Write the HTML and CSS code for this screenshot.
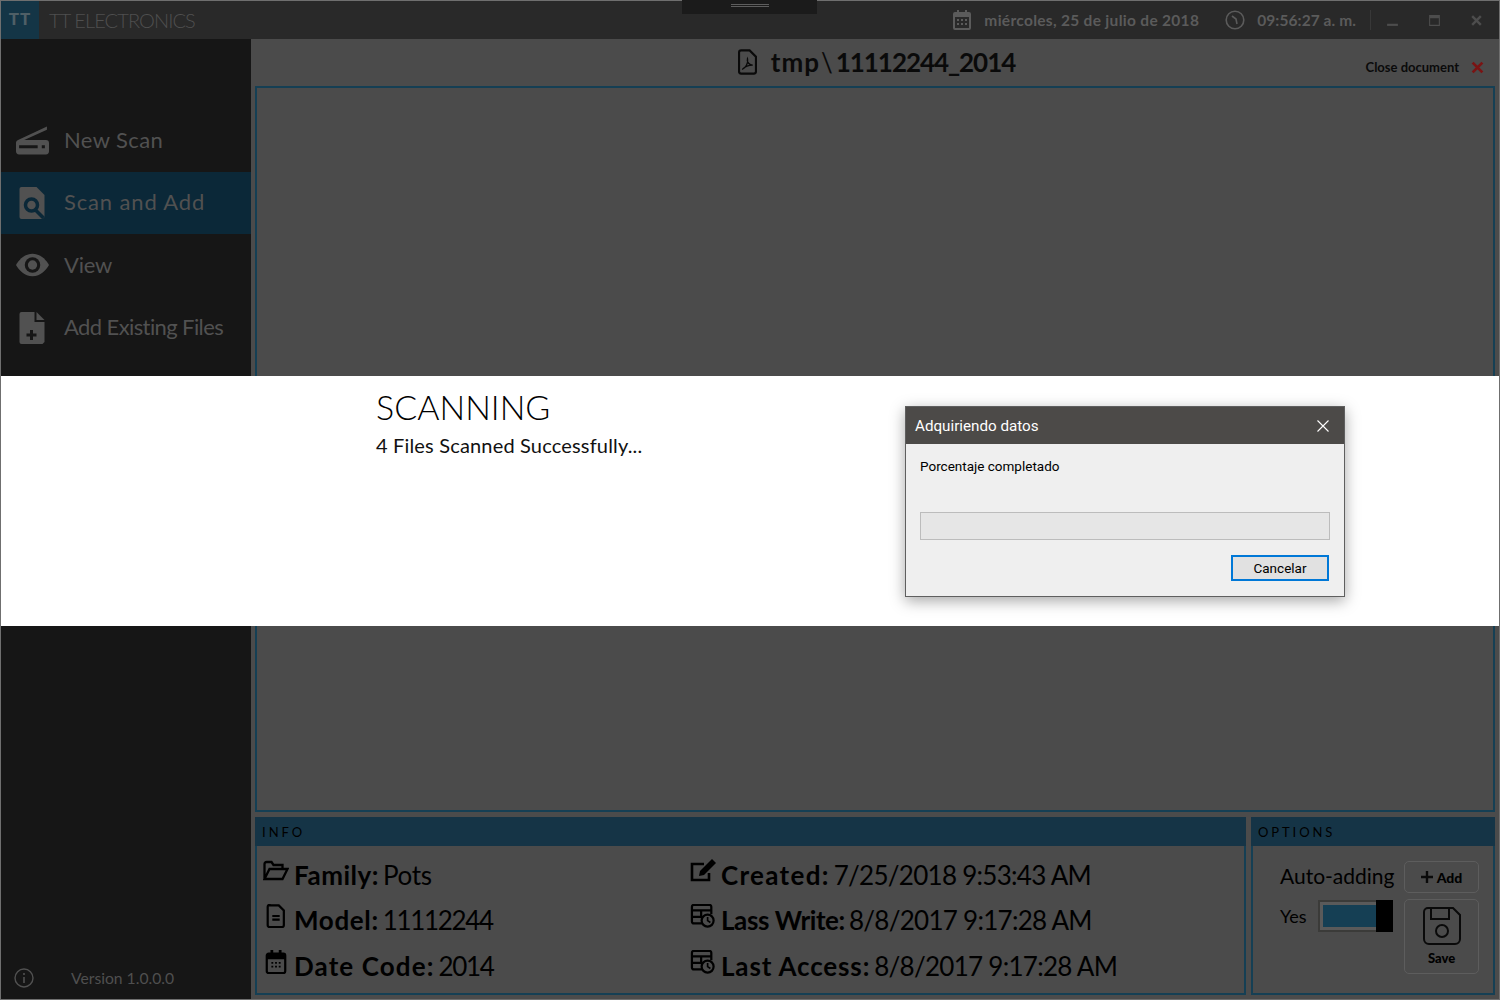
FILE: index.html
```html
<!DOCTYPE html>
<html lang="es">
<head>
<meta charset="utf-8">
<title>TT Electronics</title>
<link rel="stylesheet" href="styles.css">
</head>
<body>
<div class="window">
  <header class="titlebar">
    <div class="logo">TT</div>
    <div class="app-name">TT ELECTRONICS</div>
    <div class="status">
      <svg class="st-icon" viewBox="0 0 18 20"><path fill="#5b5b5b" d="M4 0h2v2h6V0h2v2h2a2 2 0 0 1 2 2v14a2 2 0 0 1-2 2H2a2 2 0 0 1-2-2V4a2 2 0 0 1 2-2h2zM2 7v11h14V7z"/><path fill="#5b5b5b" d="M4 9h2v2H4zM8 9h2v2H8zM12 9h2v2h-2zM4 13h2v2H4zM8 13h2v2H8zM12 13h2v2h-2z"/></svg>
      <span class="st-text date">miércoles, 25 de julio de 2018</span>
      <svg class="st-icon clock" viewBox="0 0 20 20"><circle cx="10" cy="10" r="8.8" fill="none" stroke="#5b5b5b" stroke-width="1.6"/><path d="M7 6l4 3 1 5" fill="none" stroke="#5b5b5b" stroke-width="1.6"/></svg>
      <span class="st-text time">09:56:27 a. m.</span>
      <span class="divider"></span>
      <div class="win-btns">
        <svg viewBox="0 0 12 12" class="wb"><path fill="#4d4d4d" d="M1 9h10v2H1z"/></svg>
        <svg viewBox="0 0 12 12" class="wb"><path fill="#4d4d4d" d="M1 1h10v10H1zM2 4v6h8V4z" fill-rule="evenodd"/></svg>
        <svg viewBox="0 0 12 12" class="wb"><path d="M2 2l8 8M10 2l-8 8" stroke="#4d4d4d" stroke-width="2.2"/></svg>
      </div>
    </div>
  </header>
  <div class="handle"><span></span></div>
  <div class="body">
    <aside class="sidebar">
      <nav class="nav">
        <a class="nav-item sp-new">
          <svg class="nav-icon" viewBox="0 0 32 28"><path fill="#515151" d="M2 14L30 1v3L8 14h21a3 3 0 0 1 3 3v8a3 3 0 0 1-3 3H3a3 3 0 0 1-3-3v-8a3 3 0 0 1 2-3z"/><path fill="#161616" d="M3 19h18v3H3zM25 19h3v3h-3z"/></svg>
          <span>New Scan</span>
        </a>
        <a class="nav-item active sp-scan">
          <svg class="nav-icon" viewBox="0 0 32 32"><path fill="#515151" d="M5 0h15l8 8v22l-2 2H5a2 2 0 0 1-2-2V2a2 2 0 0 1 2-2z"/><circle cx="15" cy="18" r="6" fill="none" stroke="#0b2838" stroke-width="3.5"/><path d="M19 23l8 8" stroke="#0b2838" stroke-width="3.5"/></svg>
          <span>Scan and Add</span>
        </a>
        <a class="nav-item sp-view">
          <svg class="nav-icon" viewBox="0 0 32 22"><path fill="#515151" d="M16 0c8 0 13 6 16 11-3 5-8 11-16 11S3 16 0 11C3 6 8 0 16 0z"/><circle cx="16" cy="11" r="7.5" fill="#161616"/><circle cx="16" cy="11" r="4.5" fill="#515151"/></svg>
          <span>View</span>
        </a>
        <a class="nav-item sp-files">
          <svg class="nav-icon" viewBox="0 0 32 32"><path fill="#515151" d="M5 0h13v10h10v20l-2 2H5a2 2 0 0 1-2-2V2a2 2 0 0 1 2-2zM20 0l8 8h-8z"/><path d="M10 23h10M15 18v10" stroke="#161616" stroke-width="3"/></svg>
          <span>Add Existing Files</span>
        </a>
      </nav>
      <footer class="version">
        <svg class="info-icon" viewBox="0 0 20 20"><circle cx="10" cy="10" r="9" fill="none" stroke="#515151" stroke-width="1.4"/><path d="M10 9v6M10 5v2" stroke="#515151" stroke-width="1.6"/></svg>
        <span>Version 1.0.0.0</span>
      </footer>
    </aside>
    <main class="main">
      <div class="doc-head">
        <div class="doc-title">
          <svg class="pdf" viewBox="0 0 18 24"><path fill="none" stroke="#0a0a0a" stroke-width="2" d="M3 1h8l6 6v14a2 2 0 0 1-2 2H3a2 2 0 0 1-2-2V3a2 2 0 0 1 2-2z"/><path fill="none" stroke="#0a0a0a" stroke-width="1.3" d="M4 19c3-1 6-6 5-10-1 3 2 6 5 6-3 0-7 1-10 4z"/></svg>
          <span><span class="t-dir">tmp</span><span class="t-sep">\</span><span class="t-num">11112244_2014</span></span>
        </div>
        <div class="close-doc">
          <span>Close document</span>
          <svg class="close-x" viewBox="0 0 12 12"><path d="M1.5 1.5l9 9M10.500 1.500l-9 9" stroke="#7a1414" stroke-width="2.600"/></svg>
        </div>
      </div>
      <div class="preview"></div>
      <div class="panels">
        <section class="panel">
          <h2 class="panel-title">INFO</h2>
          <div class="info-grid">
            <div class="info-col col-a">
              <p class="row"><svg class="ri" viewBox="0 0 26 20"><path fill="none" stroke="#000" stroke-width="2.300" d="M1.500 18V3a2 2 0 0 1 2-2h5l2 3h9v4M1.500 18l5-10h18l-5 10z"/></svg><b class="k-family">Family:</b><span class="val val-word">Pots</span></p>
              <p class="row"><svg class="ri narrow" viewBox="0 0 20 26"><path fill="none" stroke="#000" stroke-width="2.400" d="M3 1.500h10l5.500 5.500v16a2 2 0 0 1-2 2H3a2 2 0 0 1-2-2V3a2 2 0 0 1 2-2zM6 13h8M6 17h8"/></svg><b class="k-model">Model:</b><span class="val val-code">11112244</span></p>
              <p class="row"><svg class="ri narrow" viewBox="0 0 22 26"><path fill="none" stroke="#000" stroke-width="2.400" d="M3 4h16a2 2 0 0 1 2 2v17a2 2 0 0 1-2 2H3a2 2 0 0 1-2-2V6a2 2 0 0 1 2-2z"/><path fill="#000" d="M1 4h20v6H1zM5 0h3v5H5zM14 0h3v5h-3zM6 13h2v2H6zM10 13h2v2h-2zM14 13h2v2h-2zM6 17h2v2H6zM10 17h2v2h-2zM14 17h2v2h-2z"/></svg><b class="k-date">Date Code:</b><span class="val val-code">2014</span></p>
            </div>
            <div class="info-col col-b">
              <p class="row"><svg class="ri" viewBox="0 0 26 24"><path fill="none" stroke="#000" stroke-width="2.600" d="M19 14v7H2V5h12"/><path fill="#000" d="M10 12l12-12 4 4-12 12-5 1z"/></svg><b class="k-created">Created:</b><span class="val">7/25/2018 9:53:43 AM</span></p>
              <p class="row"><svg class="ri" viewBox="0 0 26 26"><path fill="none" stroke="#000" stroke-width="2.400" d="M12 21H3a2 2 0 0 1-2-2V3a2 2 0 0 1 2-2h17a2 2 0 0 1 2 2v8M1 7h21M1 14h11M11 7v7"/><circle cx="18" cy="18" r="6.500" fill="none" stroke="#000" stroke-width="2.400"/><path d="M18 14v4l3 2" fill="none" stroke="#000" stroke-width="1.800"/></svg><b class="k-write">Lass Write:</b><span class="val">8/8/2017 9:17:28 AM</span></p>
              <p class="row"><svg class="ri" viewBox="0 0 26 26"><path fill="none" stroke="#000" stroke-width="2.400" d="M12 21H3a2 2 0 0 1-2-2V3a2 2 0 0 1 2-2h17a2 2 0 0 1 2 2v8M1 7h21M1 14h11M11 7v7"/><circle cx="18" cy="18" r="6.500" fill="none" stroke="#000" stroke-width="2.400"/><path d="M18 14v4l3 2" fill="none" stroke="#000" stroke-width="1.800"/></svg><b class="k-access">Last Access:</b><span class="val">8/8/2017 9:17:28 AM</span></p>
            </div>
          </div>
        </section>
        <section class="panel options">
          <h2 class="panel-title wide">OPTIONS</h2>
          <div class="opt-body">
            <div class="opt-left">
              <div class="auto">Auto-adding</div>
              <div class="yes-row">
                <span>Yes</span>
                <div class="toggle"><div class="track"></div><div class="thumb"></div></div>
              </div>
            </div>
            <div class="opt-right">
              <button class="btn add"><svg viewBox="0 0 12 12" class="plus"><path d="M6 0v12M0 6h12" stroke="#0a0a0a" stroke-width="2.400"/></svg><span>Add</span></button>
              <button class="btn save">
                <svg viewBox="0 0 38 38" class="disk"><path fill="none" stroke="#0a0a0a" stroke-width="2" d="M5 1h25l7 7v24a5 5 0 0 1-5 5H6a5 5 0 0 1-5-5V5a4 4 0 0 1 4-4zM8 1v11h18V1"/><circle cx="19" cy="24" r="6" fill="none" stroke="#0a0a0a" stroke-width="2"/></svg>
                <span>Save</span>
              </button>
            </div>
          </div>
        </section>
      </div>
    </main>
  </div>
  <div class="band">
    <div class="scan-text">
      <h1>SCANNING</h1>
      <p>4 Files Scanned Successfully...</p>
    </div>
    <div class="dialog">
      <div class="dlg-title"><span>Adquiriendo datos</span>
        <svg viewBox="0 0 12 12" class="dlg-x"><path d="M.5.5l11 11M11.500.5l-11 11" stroke="#fff" stroke-width="1.100"/></svg>
      </div>
      <div class="dlg-body">
        <p class="dlg-label">Porcentaje completado</p>
        <div class="progress"></div>
        <div class="dlg-actions"><button class="cancel">Cancelar</button></div>
      </div>
    </div>
  </div>
</div>
</body>
</html>
```
FILE: styles.css
```css
* { box-sizing: border-box; }
html, body { margin: 0; padding: 0; }
body { width: 1500px; height: 1000px; overflow: hidden; font-family: "Lato", "Liberation Sans", sans-serif; }
.window { position: relative; width: 1500px; height: 1000px; border: 1px solid #6f6f6f; display: flex; flex-direction: column; background: #4b4b4b; }
.titlebar { height: 38px; flex: none; background: #292929; display: flex; align-items: center; }
.logo { width: 38px; height: 38px; background: #143546; color: #4f5f66; font-weight: 900; font-size: 17px; display: flex; align-items: center; justify-content: center; letter-spacing: 1px; padding-bottom: 4px; }
.app-name { margin-left: 10px; color: #4f4f4f; font-size: 20px; font-weight: 300; letter-spacing: -0.9px; }
.status { margin-left: auto; display: flex; align-items: center; }
.st-icon { width: 18px; height: 20px; }
.st-text { color: #5b5b5b; font-size: 15.500px; font-weight: 700; white-space: nowrap; }
.date { margin-left: 13px; letter-spacing: .3px; }
.clock { width: 20px; margin-left: 26px; }
.time { margin-left: 12px; letter-spacing: .08px; }
.divider { width: 1px; height: 20px; background: #383838; margin-left: 14px; }
.win-btns { display: flex; gap: 29px; margin-left: 15px; margin-right: 16px; }
.wb { width: 13px; height: 13px; }
.handle { position: absolute; left: 681px; top: -1px; width: 135px; height: 14px; background: #1b1b1b; display: flex; justify-content: center; padding-top: 4px; }
.handle span { display: block; width: 38px; height: 3px; border-top: 1px solid #5e5e5e; border-bottom: 1px solid #5e5e5e; }
.body { flex: 1; min-height: 0; display: flex; }
.sidebar { width: 250px; flex: none; background: #161616; display: flex; flex-direction: column; padding-top: 70px; }
.nav { display: flex; flex-direction: column; gap: 0; }
.nav-item { height: 62.500px; display: flex; align-items: center; padding-left: 15px; color: #515151; font-size: 22px; font-weight: 400; }
.nav-item span { margin-bottom: 2px; }
.nav-item.active { background: #0b2838; }
.sp-new { letter-spacing: .4px; }
.sp-scan { letter-spacing: .85px; }
.sp-view { letter-spacing: -.25px; }
.sp-files { letter-spacing: -.6px; }
.nav-icon { width: 33px; height: 32px; margin-right: 15px; }
.version { margin-top: auto; height: 40px; display: flex; align-items: center; padding: 0 0 3px 13px; color: #4f4f4f; font-size: 15.700px; }
.info-icon { width: 20px; height: 20px; margin-right: 37px; }
.main { flex: 1; min-width: 0; display: flex; flex-direction: column; padding: 0 4px 4px 4px; }
.doc-head { height: 47px; flex: none; display: flex; align-items: center; position: relative; justify-content: center; }
.doc-title { display: flex; align-items: center; gap: 14px; font-size: 26px; font-weight: 700; color: #0a0a0a; margin: -2px 0 0 3px; }
.t-dir { letter-spacing: 1px; }
.t-sep { margin: 0 3px 0 1px; font-weight: 400; }
.t-num { letter-spacing: -1.050px; }
.pdf { width: 19px; height: 26px; }
.close-doc { position: absolute; right: 11px; top: 20px; display: flex; align-items: center; gap: 12px; font-size: 13px; font-weight: 700; color: #0a0a0a; }
.close-x { width: 13px; height: 13px; }
.preview { height: 726px; flex: none; border: 2px solid #153f54; }
.panels { flex: 1; display: flex; gap: 5px; margin-top: 5px; min-height: 0; }
.panel { flex: 1; min-width: 0; border: 2px solid #153f54; border-top: none; display: flex; flex-direction: column; }
.options { flex: none; width: 244px; }
.panel-title { margin: 0 -2px; height: 29px; background: #153446; color: #000; font-size: 13px; font-weight: 400; letter-spacing: 3px; padding: 7px 0 0 7px; }
.wide { letter-spacing: 2.900px; }
.info-grid { display: grid; grid-template-columns: 427px 1fr; padding: 6px 0 0 6px; }
.info-col { display: flex; flex-direction: column; }
.row { margin: 0; height: 45.500px; display: flex; align-items: center; font-size: 26px; font-weight: 400; color: #000; white-space: pre; }
.row b { font-weight: 700; }
.k-family { letter-spacing: .5px; }
.k-model { letter-spacing: .65px; }
.k-date { letter-spacing: 1.100px; }
.k-created { letter-spacing: 1.300px; }
.k-write { letter-spacing: -.4px; }
.k-access { letter-spacing: .85px; }
.val { letter-spacing: -.72px; margin-left: 4px; }
.val-word { letter-spacing: -.3px; }
.val-code { letter-spacing: -1.350px; }
.ri { width: 26px; height: 24px; flex: none; margin-right: 5px; margin-top: -8px; }
.ri.narrow { width: 22px; margin-left: 2px; margin-right: 7px; }
.opt-body { display: flex; padding: 15px 14px 0 27px; justify-content: space-between; }
.opt-left { display: flex; flex-direction: column; }
.auto { font-size: 21px; color: #000; height: 28px; display: flex; align-items: center; }
.yes-row { display: flex; align-items: center; gap: 11px; font-size: 18px; color: #000; margin-top: 11px; }
.toggle { width: 75px; height: 32px; border: 2px solid #3b3b39; background: #5a5a5a; display: flex; padding: 3px 0 3px 3px; }
.track { flex: 1; background: #153f54; }
.thumb { width: 17px; height: 32px; margin: -5px -2px -5px 0; background: #000; }
.opt-right { display: flex; flex-direction: column; gap: 6px; }
.btn { width: 75px; background: transparent; border: 1px solid #5d5d5d; border-radius: 5px; font-family: inherit; color: #000; font-weight: 900; padding: 0; display: flex; align-items: center; justify-content: center; }
.add { height: 32px; gap: 4px; font-size: 14px; }
.plus { width: 12px; height: 12px; }
.save { height: 75px; flex-direction: column; font-size: 13px; gap: 5px; }
.disk { width: 38px; height: 38px; }
.band { position: absolute; left: 0; top: 375px; width: 1498px; height: 250px; background: #fff; display: flex; }
.scan-text { width: 904px; padding: 11px 0 0 375px; color: #111; }
.scan-text h1 { margin: 0; font-size: 34px; font-weight: 300; line-height: 40px; color: #000; }
.scan-text p { margin: 5px 0 0; font-size: 20px; font-weight: 400; line-height: 26px; letter-spacing: .17px; }
.dialog { width: 440px; height: 191px; margin-top: 30px; border: 1px solid #5f5f5f; background: #efefef; box-shadow: 0 4px 14px rgba(0,0,0,.35); font-family: "Roboto", "Liberation Sans", sans-serif; }
.dlg-title { height: 37px; background: #4c4a48; color: #fff; font-size: 15.200px; display: flex; align-items: center; justify-content: space-between; padding: 0 15px 0 9px; }
.dlg-title span { margin-top: 1px; }
.dlg-x { width: 12px; height: 12px; }
.dlg-body { padding: 13px 14px 0; }
.dlg-label { margin: 0; font-size: 13.500px; color: #000; line-height: 18px; }
.progress { height: 28px; margin-top: 37px; background: #e6e6e6; border: 1px solid #bcbcbc; }
.dlg-actions { display: flex; justify-content: flex-end; margin-top: 15px; padding-right: 1px; }
.cancel { width: 98px; height: 26px; background: #e1e1e1; border: 2px solid #0078d7; font-family: inherit; font-size: 13.500px; color: #000; padding: 0; }
```
